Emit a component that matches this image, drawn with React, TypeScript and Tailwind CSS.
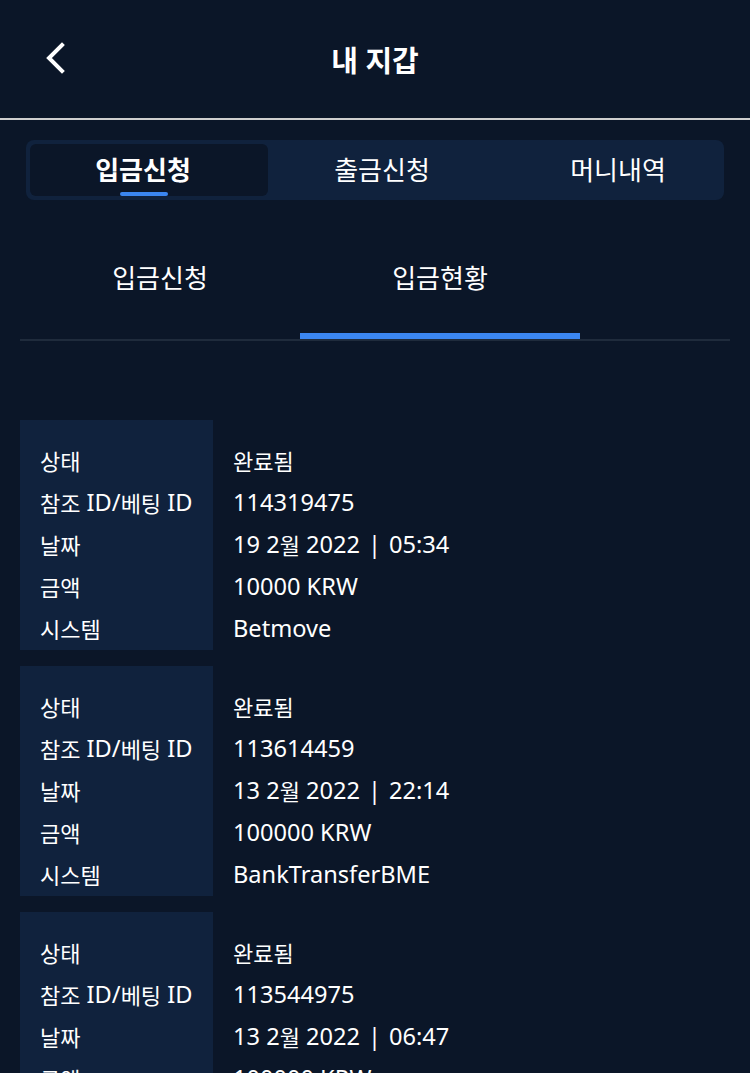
import React from "react";

const records = [
  { status: "완료됨", id: "114319475", date: "19 2월 2022", time: "05:34", amount: "10000 KRW", system: "Betmove" },
  { status: "완료됨", id: "113614459", date: "13 2월 2022", time: "22:14", amount: "100000 KRW", system: "BankTransferBME" },
  { status: "완료됨", id: "113544975", date: "13 2월 2022", time: "06:47", amount: "100000 KRW", system: "BankTransferBME" },
];

const labels = ["상태", "참조 ID/베팅 ID", "날짜", "금액", "시스템"];

function Mixed({ text }: { text: string }) {
  const parts = text.split(/([\uac00-\ud7a3]+)/).filter((p) => p.length > 0);
  return (
    <>
      {parts.map((p, i) =>
        /[\uac00-\ud7a3]/.test(p) ? (
          <span key={i} className="text-[22px]">{p}</span>
        ) : (
          <span key={i} className="text-[23.6px] whitespace-pre">{p}</span>
        )
      )}
    </>
  );
}

export default function App() {
  return (
    <div
      className="w-[750px] h-[1073px] overflow-hidden bg-[#0b1628] text-white"
      style={{ fontFamily: '"Noto Sans", "Noto Sans CJK KR", sans-serif' }}
    >
      {/* Header */}
      <div className="relative h-[120px] flex items-center justify-center border-b-2 border-[#cfcfcf]">
        <div className="absolute left-[43px] top-[42px]">
          <svg width="24" height="32" viewBox="0 0 24 32" fill="none">
            <path d="M19 3 L6 16 L19 29" stroke="white" strokeWidth="4" strokeLinecap="square" strokeLinejoin="miter" />
          </svg>
        </div>
        <div className="text-[29px] font-bold leading-none mt-[2px]">내 지갑</div>
      </div>

      {/* Main tabs */}
      <div className="px-[26px] pt-[20px]">
        <div className="h-[60px] rounded-[8px] bg-[#10223d] p-[4px] flex">
          <div className="relative w-[238px] h-full rounded-[6px] bg-[#0b1628] flex items-center justify-center">
            <span className="text-[26px] font-bold pr-[12px]">입금신청</span>
            <div className="absolute bottom-[0px] left-[90px] w-[48px] h-[4px] rounded-[2px] bg-[#3b86f0]" />
          </div>
          <div className="w-[228px] flex items-center justify-center text-[26px]">출금신청</div>
          <div className="flex-1 flex items-center justify-center pl-[20px] text-[26px]">머니내역</div>
        </div>
      </div>

      {/* Sub tabs */}
      <div className="mx-[20px] mt-[40px] flex border-b-2 border-[#1f2b3c] h-[101px]">
        <div className="w-[280px] flex items-center justify-center text-[26px] pb-[22px]">입금신청</div>
        <div className="relative w-[280px] flex items-center justify-center text-[26px] pb-[22px]">
          입금현황
          <div className="absolute left-0 right-0 bottom-0 h-[6px] bg-[#3b86f0]" />
        </div>
      </div>

      {/* Records */}
      <div className="mt-[79px] flex flex-col gap-[16px] px-[20px]">
        {records.map((r, i) => {
          const values = [r.status, r.id, "", r.amount, r.system];
          return (
            <div key={i} className="flex">
              <div className="w-[193px] bg-[#10223d] pt-[20px] pl-[20px]">
                {labels.map((l) => (
                  <div key={l} className="h-[42px] flex items-center whitespace-nowrap">
                    <Mixed text={l} />
                  </div>
                ))}
              </div>
              <div className="flex-1 pt-[20px] pl-[20px]">
                {values.map((v, j) => (
                  <div key={j} className="h-[42px] flex items-center whitespace-nowrap">
                    {j === 2 ? (
                      <>
                        <Mixed text={r.date} />
                        <span className="text-[23.6px] mx-[8px]">|</span>
                        <Mixed text={r.time} />
                      </>
                    ) : (
                      <Mixed text={v} />
                    )}
                  </div>
                ))}
              </div>
            </div>
          );
        })}
      </div>
    </div>
  );
}
